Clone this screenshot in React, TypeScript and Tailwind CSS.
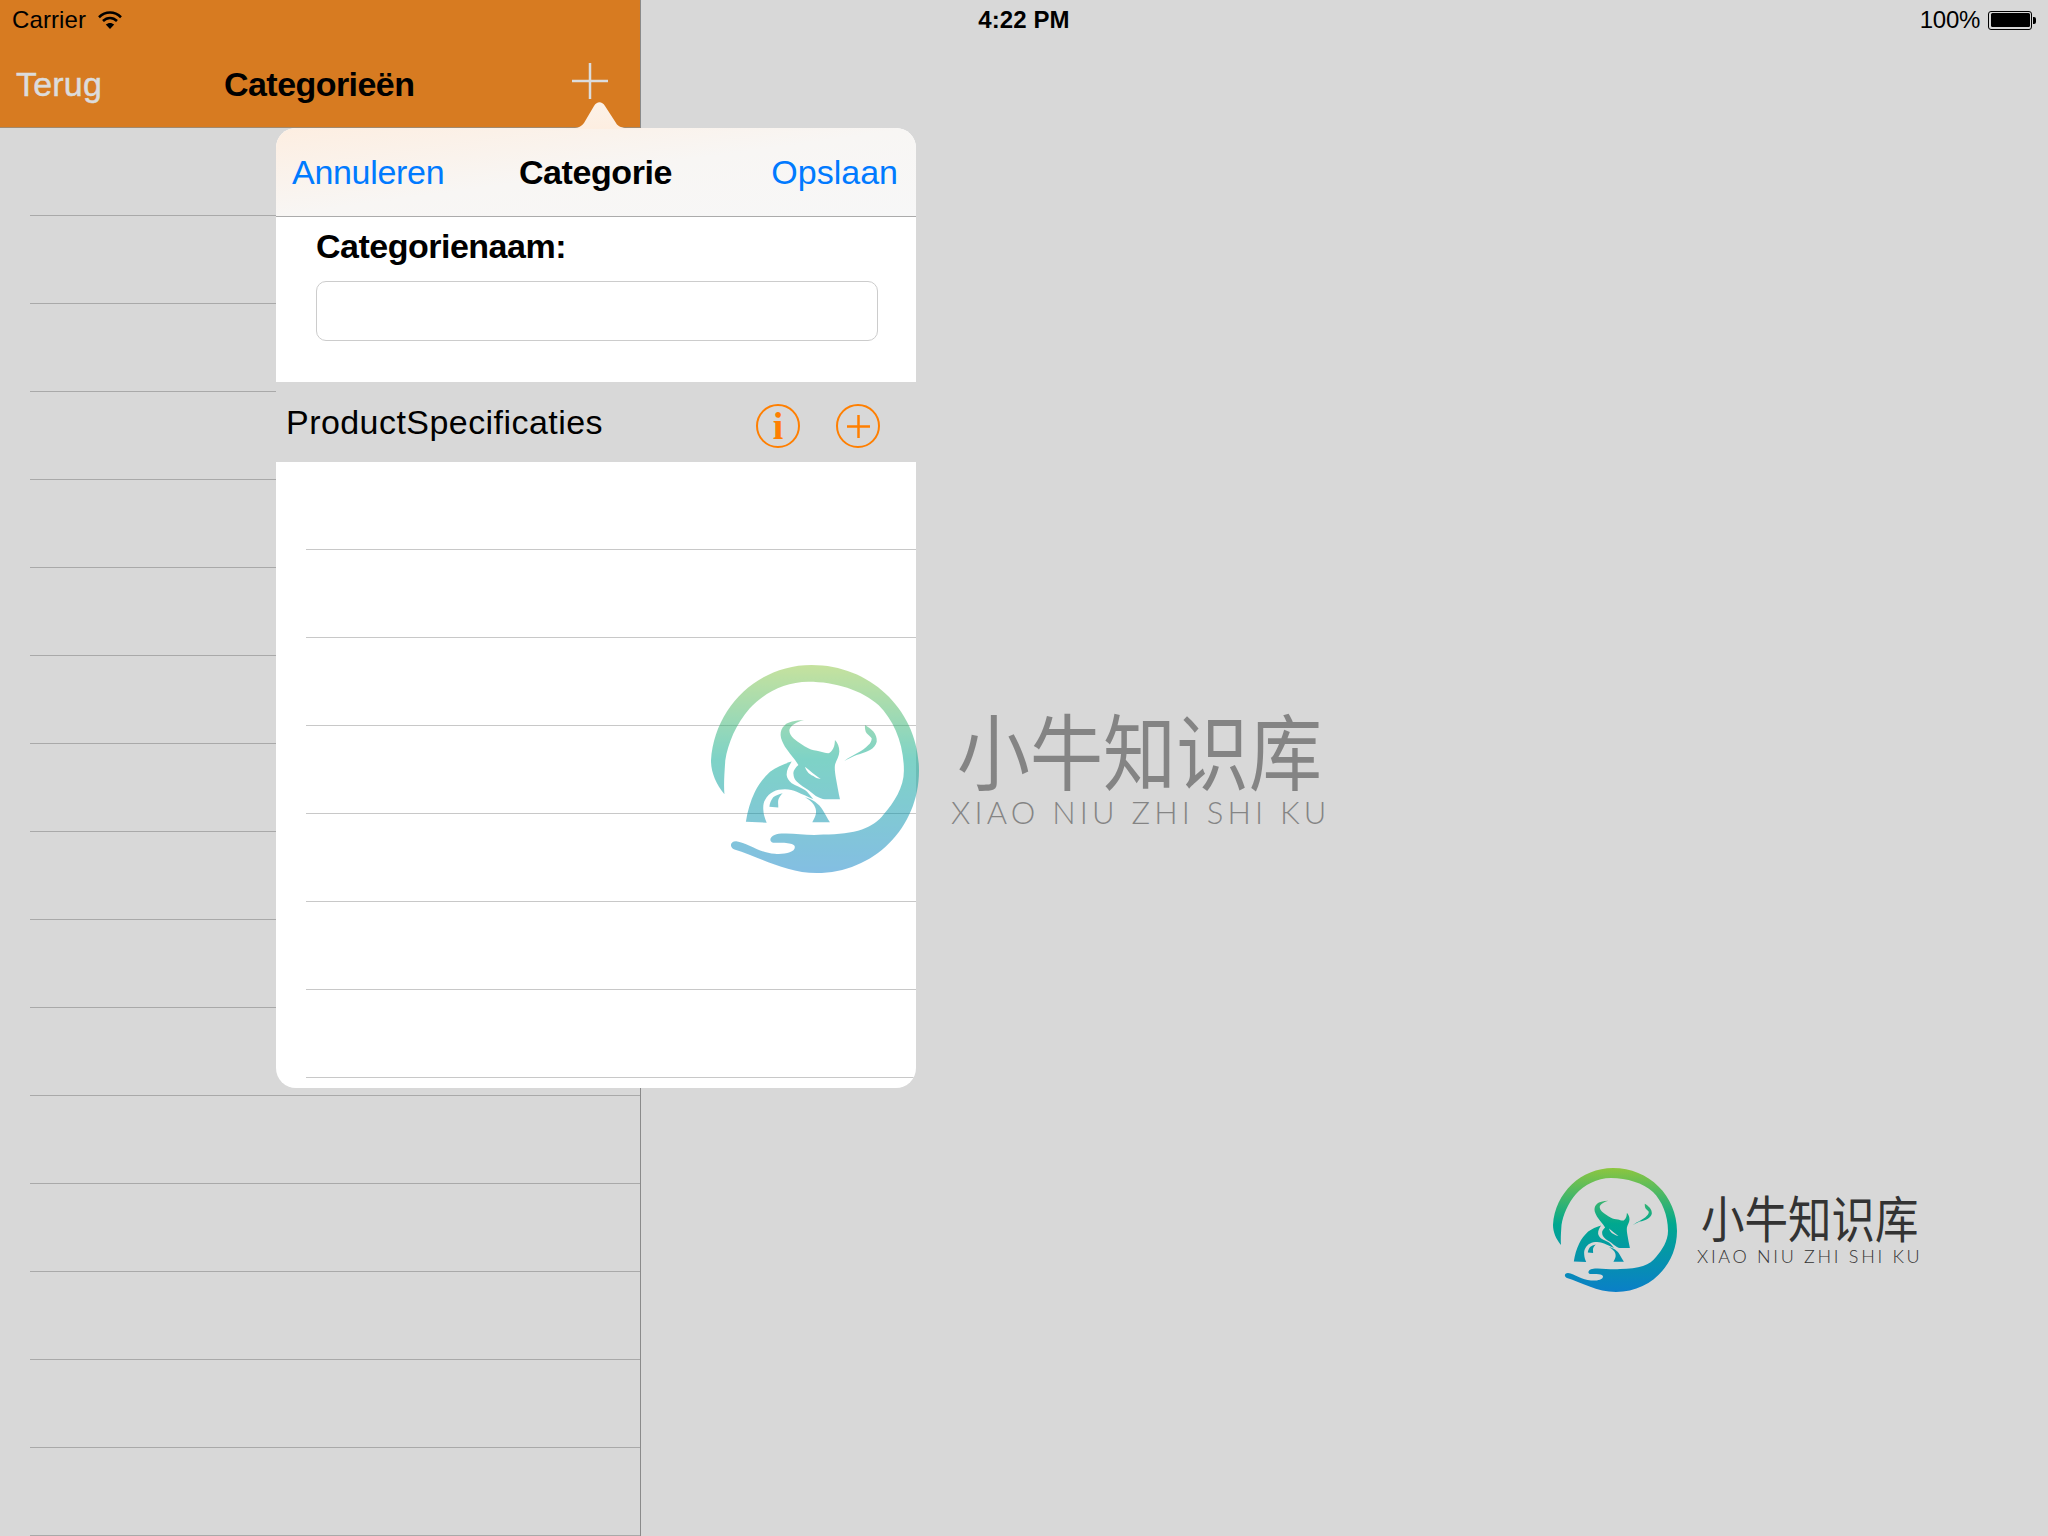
const leftRows = Array.from({ length: 16 }, (_, i) => i);
const popoverRows = Array.from({ length: 7 }, (_, i) => i);

function LogoMark({ id, className }: { id: string; className: string }) {
  return (
    <svg className={className} viewBox="0 0 124 124">
      <defs>
        <linearGradient id={id} gradientUnits="userSpaceOnUse" x1="0" y1="0" x2="0" y2="124">
          <stop offset="0" stopColor="#8dc63f" />
          <stop offset="0.45" stopColor="#00a88f" />
          <stop offset="1" stopColor="#0a7fc8" />
        </linearGradient>
      </defs>
      <g fill={`url(#${id})`}>
        {/* ring running into the open hand */}
        <path d="M8 77C3 71 0 64 0 57C2 25 28 0 60 0C96 0 124 28 124 63C124 97 97 124 63 124C44 124 28 114 14 110C11 109 11 105 15 105C22 106 29 112 38 112.5C43 113 50 112 50 108.5C50 106 43 106 37 106C34 105 35 101 42 100.5C50 100 58 102 67 101C76 101 84 100 90 98C96 96 100 93 103 89C109 82 115 73 115 63C115 47 109 33 100 24C90 15 74 10 58 10C44 10 31 17 23 26C15 35 10 47 8.5 57C8 65 7.5 71 8 77Z" />
        {/* bull head, the sliver is a cut-out */}
        <path
          fillRule="evenodd"
          d="M55.4 32.8C50 33 46 34 44.1 35.7C42 37.5 41.5 39.5 41.5 41.7C41.5 44 43 46.5 44.1 48.7C46 51.5 48 54 50.1 56.6L52.1 59.6C50.5 61 49 63 49.1 64.6C49.2 67 50 68.5 51.1 69.5C53 71.5 55.5 73 58 74.5C60 76 62 78 64 78.9C66 80 67.5 80.1 69 80.1L76.9 80.1C76 76 75.2 71.5 74.5 67.6C74 64.5 73.6 62 73.9 59.6C74.5 57 76.5 54.5 76.5 51.6C76.5 48.5 75.5 46.5 73.9 44.7C73.8 46.5 73.6 48.3 72.9 49.7C72 51.5 71 52.6 70 52.6C68 52.6 66.5 52 65 51.6C62.5 51 60 50.8 58 49.7C55 48 52 46.2 49.1 43.7C47.5 42 46.7 40.5 46.7 38.7C47.5 36 51 34 55.4 32.8ZM56 60.6C59 63 62 65.5 65.4 68C63.5 67.8 62 67 61 66.2C59.5 65.5 58.5 64.8 58 64.2C57 63 56.5 62 56 60.6Z"
        />
        {/* bull body */}
        <path d="M48.1 57.6C43 59 39 61 35.2 63.6C31.5 67 28.5 71 26.2 75.5C23.5 81 21.8 87 20.8 93.4L33.2 94C32 91 31.3 89 31.2 86.4C31 84 31.3 82 32.2 80.5C33.5 78 35 76.5 37.1 75.5C39 74.5 41.5 74.1 44.1 74.1C47 74.3 49 74.8 51.1 75.5C54.5 77 58 78.5 61 80C59 77.5 57.5 75.5 56 74.5C53.5 73 50.5 72 48.1 70.5C46.3 69 45.3 67.5 45.1 65.6C45 62.5 46.5 60 48.1 57.6Z" />
        {/* calf */}
        <path d="M42.7 76.5C40.5 77 38.5 77.8 37.1 78.9C35.8 80.5 35 82.5 34.8 84.5L40.1 84.9C40.2 83.5 39.8 82 40.1 80.5C40.5 79 41.5 77.7 42.7 76.5Z" />
        <path d="M56 78.9C58 79.5 60 80.3 62 81.5C64 83 65.5 84.5 66.6 86.4C68 88.8 69.5 91.5 70.9 93.8L60.4 93.8C61.3 92 62.2 90.5 62.6 88.4C62.8 86.5 62.3 85 61.4 83.5C60 81.5 58 80 56 78.9Z" />
        {/* wisp of breath */}
        <path d="M91.8 35.7C91.6 37.5 92 39.5 92.8 40.7C93.8 41.8 95 42.5 95.8 43.7C95.8 45.5 95 46.7 93.8 47.7C92 49.7 90 51 87.8 52.2C85 53.7 82 55.3 79.5 57.2C82 55.7 84.5 54.7 86.8 53.6C89.5 53 92.5 52 94.8 50.7C96.8 49.5 98.3 47.7 98.8 45.7C99 43.5 98.2 41.5 96.8 39.7C95.5 38.2 93.5 36.7 91.8 35.7Z" />
      </g>
    </svg>
  );
}

export default function App() {
  return (
    <div className="relative flex w-[2048px] h-[1536px] overflow-hidden bg-[#d8d8d8] font-['Liberation_Sans',sans-serif] text-black">
      {/* Master column */}
      <div className="w-[641px] h-full border-r border-[#8a8a8a] shrink-0">
        <div className="h-[128px] bg-[#d77b21] border-b border-[#a08a70] flex items-end pb-[23px] pl-[16px]">
          <span className="text-[34px] leading-[40px] text-[#dcdcdc] w-[208px] tracking-[0.2px] [-webkit-text-stroke:0.5px_#dcdcdc]">Terug</span>
          <span className="text-[34px] leading-[40px] font-bold tracking-[-0.55px]">Categorieën</span>
        </div>
        {leftRows.map((row) => (
          <div key={row} className="h-[88px] pl-[30px]">
            <div className="h-full border-b border-[#a9a9a9]" />
          </div>
        ))}
      </div>

      {/* Nav plus button */}
      <svg className="absolute left-[572px] top-[63px] w-[36px] h-[36px]" viewBox="0 0 36 36">
        <path d="M18 0V36M0 18H36" stroke="#dcdcdc" strokeWidth="2.5" />
      </svg>

      {/* Status bar */}
      <div className="absolute inset-x-0 top-0 h-[40px] grid grid-cols-3 items-center text-[24px] leading-[28px]">
        <div className="flex items-center pl-[12px] gap-[12px]">
          <span className="tracking-[0.1px]">Carrier</span>
          <svg className="w-[24px] h-[18px] -mt-[1px]" viewBox="0 0 24 18" fill="none" stroke="#000" strokeWidth="2.6">
            <path d="M1 6.2C7.4 0 16.6 0 23 6.2" />
            <path d="M5 10C9.2 6 14.8 6 19 10" />
            <path d="M12 18L7.8 13.6C10.2 11.4 13.8 11.4 16.2 13.6Z" fill="#000" stroke="none" />
          </svg>
        </div>
        <div className="text-center font-bold tracking-[0.1px]">4:22 PM</div>
        <div className="flex items-center justify-end pr-[12px]">
          <span className="mr-[8px] tracking-[-0.3px]">100%</span>
          <div className="w-[44px] h-[19px] rounded-[3px] border border-black p-[1.5px]">
            <div className="w-full h-full rounded-[1.5px] bg-black" />
          </div>
          <div className="w-[3px] h-[7px] rounded-r-[2px] bg-black ml-[1px]" />
        </div>
      </div>

      {/* Popover */}
      <div className="absolute left-[276px] top-[128px] w-[640px] h-[960px] rounded-[20px] bg-white overflow-hidden">
        <div className="h-[89px] grid grid-cols-3 items-center border-b border-[#ababab] pl-[16px] pr-[18px] bg-gradient-to-br from-[#fdeee1] via-[#f8f6f4] to-[#f7f7f7] text-[34px] leading-[40px]">
          <span className="text-[#007aff] tracking-[-0.3px]">Annuleren</span>
          <span className="text-center font-bold tracking-[-0.4px] pl-[1px]">Categorie</span>
          <span className="text-right text-[#007aff]">Opslaan</span>
        </div>
        <div className="h-[165px] px-[40px] pt-[9px]">
          <div className="text-[34px] leading-[40px] font-bold tracking-[-0.5px]">Categorienaam:</div>
          <div className="w-[562px] h-[60px] mt-[15px] rounded-[10px] border border-[#cccccc]" />
        </div>
        <div className="h-[80px] bg-[#d8d8d8] flex items-center pl-[10px]">
          <span className="text-[34px] leading-[40px] w-[470px] -mt-[1px] tracking-[0.45px]">ProductSpecificaties</span>
          <div className="w-[44px] h-[44px] rounded-full border-[2.5px] border-[#ff7f00] flex items-center justify-center font-['Liberation_Serif',serif] font-bold text-[38px] leading-none text-[#ff7f00] mt-[8px]">
            i
          </div>
          <div className="w-[44px] h-[44px] ml-[36px] rounded-full border-[2.5px] border-[#ff7f00] flex items-center justify-center mt-[8px]">
            <svg className="w-[23px] h-[23px]" viewBox="0 0 23 23">
              <path d="M11.5 0V23M0 11.5H23" stroke="#ff7f00" strokeWidth="2.5" />
            </svg>
          </div>
        </div>
        {popoverRows.map((row) => (
          <div key={row} className="h-[88px] pl-[30px]">
            <div className="h-full border-b border-[#c8c8c8]" />
          </div>
        ))}
      </div>

      {/* Popover arrow */}
      <svg className="absolute left-[566px] top-[100px] w-[76px] h-[29px]" viewBox="0 0 76 29">
        <defs>
          <linearGradient id="arrowFill" x1="0" y1="0" x2="0" y2="1">
            <stop offset="0" stopColor="#fcf2e8" />
            <stop offset="1" stopColor="#fdeee1" />
          </linearGradient>
        </defs>
        <path d="M0 28.5C10 28.5 14 28 18 23L28 6C31 1 36 1 39 6L50 23C53 28 58 28.5 76 28.5V29H0Z" fill="url(#arrowFill)" />
      </svg>

      {/* Big faded watermark */}
      <div className="absolute left-[711px] top-[665px] flex opacity-50">
        <LogoMark id="logoFaded" className="w-[208px] h-[208px] shrink-0" />
        <div className="ml-[38px] mt-[37px] text-[#333333]">
          <div className="font-['Noto_Sans_CJK_SC',sans-serif] text-[73px] leading-[92px] scale-y-[1.14] whitespace-nowrap">小牛知识库</div>
          <div className="font-['Lato',sans-serif] font-light text-[31px] leading-[36px] tracking-[4.2px] whitespace-nowrap -ml-[6px]">XIAO NIU ZHI SHI KU</div>
        </div>
      </div>

      {/* Small watermark */}
      <div className="absolute left-[1553px] top-[1168px] flex">
        <LogoMark id="logoSolid" className="w-[124px] h-[124px] shrink-0" />
        <div className="ml-[24px] mt-[21px] text-[#333333]">
          <div className="font-['Noto_Sans_CJK_SC',sans-serif] text-[43.5px] leading-[56px] scale-y-[1.14] whitespace-nowrap">小牛知识库</div>
          <div className="font-['Lato',sans-serif] font-light text-[18px] leading-[22px] tracking-[2.7px] whitespace-nowrap -ml-[4px]">XIAO NIU ZHI SHI KU</div>
        </div>
      </div>
    </div>
  );
}
